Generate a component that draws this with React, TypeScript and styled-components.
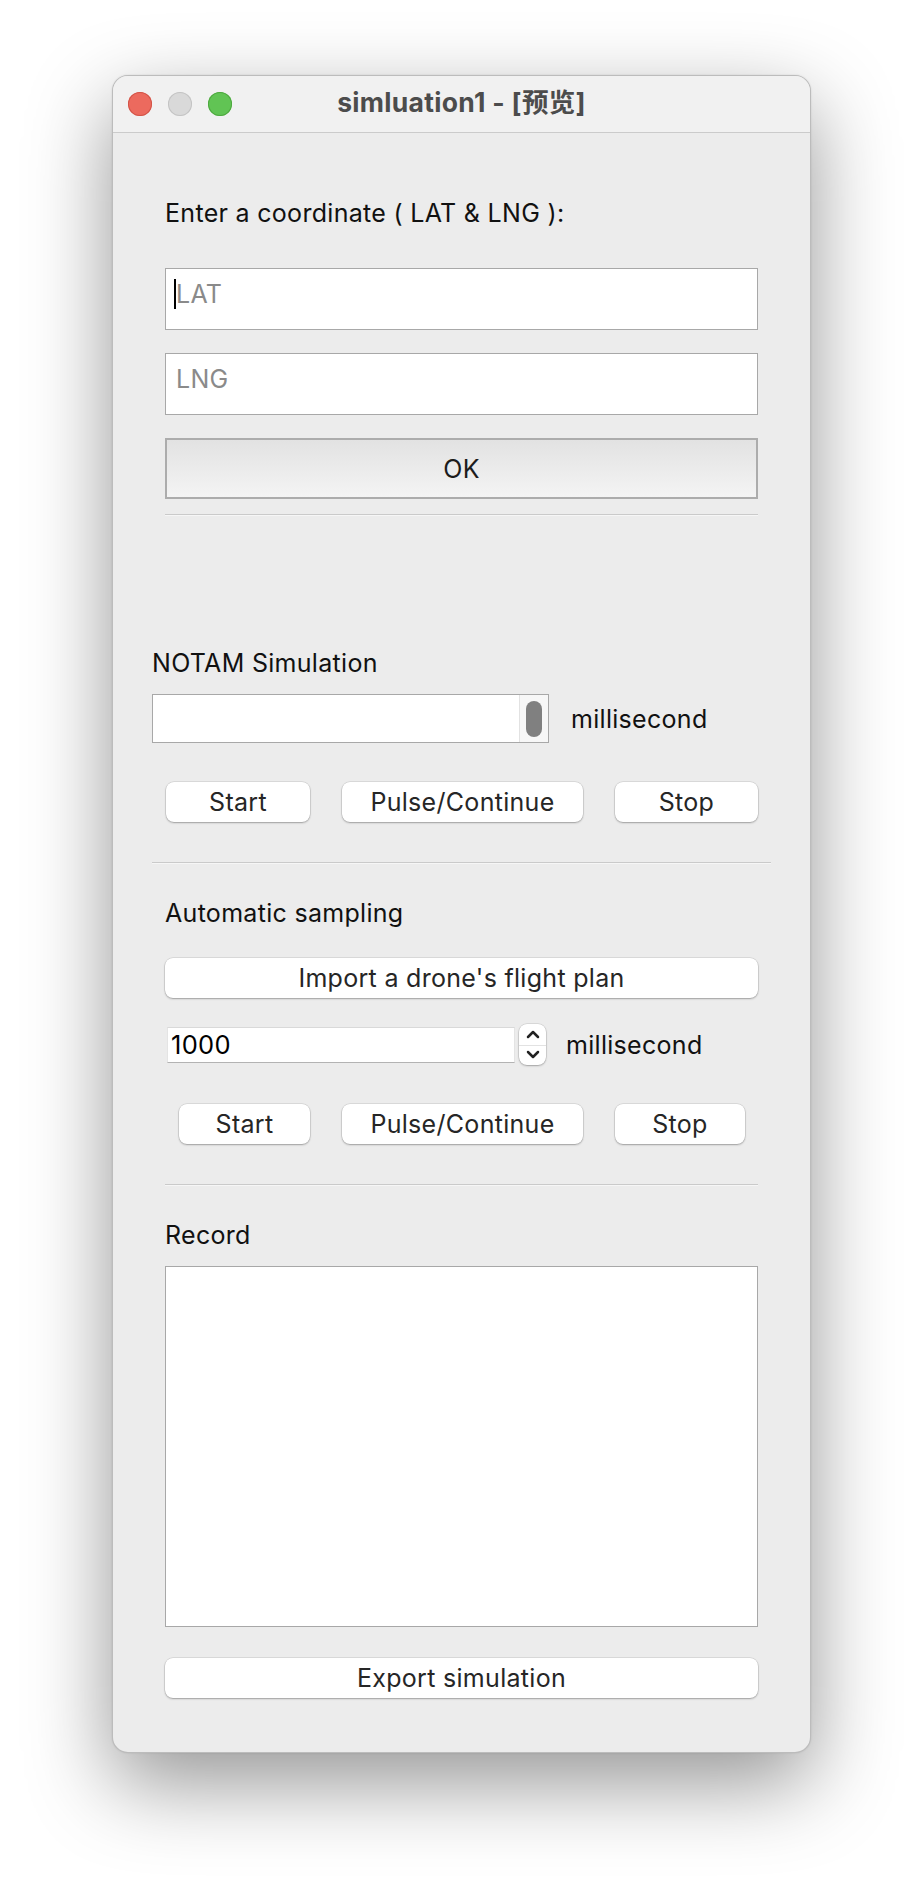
import React from "react";
import styled, { createGlobalStyle } from "styled-components";

const GlobalStyle = createGlobalStyle`
  html, body {
    margin: 0;
    padding: 0;
    background: #ffffff;
  }
  body {
    font-family: Inter, "Noto Sans", "Noto Sans CJK SC", sans-serif;
    letter-spacing: 0.3px;
    -webkit-font-smoothing: antialiased;
  }
  * { box-sizing: border-box; }
`;

const Stage = styled.div`
  width: 922px;
  height: 1900px;
  padding: 75px 0 0 112px;
  overflow: hidden;
`;

const Window = styled.div`
  width: 699px;
  height: 1678px;
  background: #ececec;
  border: 1px solid rgba(0, 0, 0, 0.2);
  border-radius: 16px;
  box-shadow: 0 30px 84px rgba(0, 0, 0, 0.42), 0 0 2px rgba(0, 0, 0, 0.12);
  overflow: hidden;
  display: flex;
  flex-direction: column;
`;

const TitleBar = styled.div`
  height: 57px;
  flex: none;
  background: #f1f1f1;
  border-bottom: 1px solid #cbcbcb;
  display: grid;
  grid-template-columns: 1fr auto 1fr;
  align-items: center;
  padding: 0 15px;
`;

const Lights = styled.div`
  display: flex;
  gap: 16px;
`;

const Light = styled.span<{ $fill: string; $edge: string }>`
  width: 24px;
  height: 24px;
  border-radius: 50%;
  background: ${(p) => p.$fill};
  box-shadow: inset 0 0 0 1px ${(p) => p.$edge};
`;

const Title = styled.div`
  font-family: Inter, "Noto Sans CJK SC", sans-serif;
  font-weight: 700;
  font-size: 26.5px;
  letter-spacing: 0.3px;
  line-height: 32px;
  padding-bottom: 4px;
  color: #4c4c4c;
  white-space: nowrap;
`;

const Content = styled.div`
  flex: 1;
  display: flex;
  flex-direction: column;
`;

const Section = styled.div<{ $inset: number }>`
  display: flex;
  flex-direction: column;
  padding: 0 ${(p) => p.$inset}px;
`;

const Label = styled.div<{ $top: number }>`
  margin-top: ${(p) => p.$top}px;
  font-size: 25px;
  line-height: 30px;
  height: 30px;
  color: #111;
  white-space: nowrap;
`;

const TextField = styled.div<{ $top: number }>`
  margin-top: ${(p) => p.$top}px;
  height: 62px;
  background: #fff;
  border: 1px solid #a8a8a8;
  display: flex;
  align-items: flex-start;
  padding: 10px 0 0 10px;
  font-size: 25px;
  line-height: 30px;
`;

const Caret = styled.span`
  width: 2px;
  height: 30px;
  background: #000;
  margin-left: -2px;
  flex: none;
`;

const Placeholder = styled.span`
  color: #8a8a8a;
`;

const OkButton = styled.button<{ $top: number }>`
  margin-top: ${(p) => p.$top}px;
  height: 61px;
  width: 100%;
  border: 2px solid #acacac;
  background: linear-gradient(#e2e2e2, #f4f4f4);
  font-family: inherit;
  letter-spacing: inherit;
  font-size: 25px;
  color: #1c1c1c;
  padding: 0;
`;

const Divider = styled.hr<{ $top: number }>`
  margin: ${(p) => p.$top}px 0 0 0;
  height: 2px;
  border: none;
  border-top: 1px solid #cacaca;
  border-bottom: 1px solid #f6f6f6;
  flex: none;
`;

const FieldRow = styled.div<{ $top: number }>`
  margin-top: ${(p) => p.$top}px;
  display: flex;
  align-items: center;
`;

const SliderField = styled.div`
  width: 397px;
  height: 49px;
  background: #fff;
  border: 1px solid #a8a8a8;
  display: flex;
  justify-content: flex-end;
`;

const SliderTrack = styled.div`
  width: 29px;
  height: 100%;
  background: #f7f7f7;
  border-left: 1px solid #e2e2e2;
  display: flex;
  align-items: center;
  justify-content: center;
`;

const SliderThumb = styled.div`
  width: 16px;
  height: 36px;
  border-radius: 8px;
  background: #808080;
`;

const Unit = styled.span<{ $gap: number }>`
  margin-left: ${(p) => p.$gap}px;
  font-size: 25px;
  color: #111;
`;

const ButtonRow = styled.div<{ $top: number; $left: number; $right: number }>`
  margin-top: ${(p) => p.$top}px;
  padding: 0 ${(p) => p.$right}px 0 ${(p) => p.$left}px;
  display: flex;
  justify-content: space-between;
`;

const PushButton = styled.button<{ $width?: number; $top?: number }>`
  margin-top: ${(p) => p.$top ?? 0}px;
  width: ${(p) => (p.$width ? `${p.$width}px` : "100%")};
  height: 40px;
  border: none;
  border-radius: 8px;
  background: #fff;
  box-shadow: 0 0 0 0.5px rgba(0, 0, 0, 0.14), 0 1px 2px rgba(0, 0, 0, 0.28);
  font-family: inherit;
  letter-spacing: inherit;
  font-size: 25px;
  color: #262626;
  padding: 0;
  white-space: nowrap;
`;

const SpinInput = styled.div`
  margin-left: 2px;
  width: 348px;
  height: 36px;
  background: #fff;
  border-top: 1px solid #d9d9d9;
  border-left: 1px solid #e4e4e4;
  border-right: 1px solid #e4e4e4;
  border-bottom: 1px solid #b3b3b3;
  padding-left: 3px;
  display: flex;
  align-items: center;
  font-size: 25.5px;
  color: #000;
`;

const Spinner = styled.div`
  margin-left: 4px;
  width: 27px;
  height: 41px;
  border-radius: 8px;
  background: #fff;
  box-shadow: 0 0 0 0.5px rgba(0, 0, 0, 0.15), 0 1px 2px rgba(0, 0, 0, 0.25);
  display: grid;
  grid-template-rows: 1fr 1fr;
  overflow: hidden;
`;

const SpinHalf = styled.div<{ $sep?: boolean }>`
  display: flex;
  align-items: center;
  justify-content: center;
  border-top: ${(p) => (p.$sep ? "1px solid #e2e2e2" : "none")};
`;

const RecordBox = styled.div<{ $top: number }>`
  margin-top: ${(p) => p.$top}px;
  height: 361px;
  background: #fff;
  border: 1px solid #a8a8a8;
`;

const Chevron = ({ up }: { up?: boolean }) => (
  <svg width="14" height="10" viewBox="0 0 14 10">
    <polyline
      points={up ? "2,8 7,3 12,8" : "2,2 7,7 12,2"}
      fill="none"
      stroke="#222"
      strokeWidth="2.5"
      strokeLinecap="round"
      strokeLinejoin="round"
    />
  </svg>
);

export default function App() {
  return (
    <>
      <GlobalStyle />
      <Stage>
        <Window>
          <TitleBar>
            <Lights>
              <Light $fill="#ec6a5e" $edge="#d25448" />
              <Light $fill="#d9d9d9" $edge="#c4c4c4" />
              <Light $fill="#61c454" $edge="#4ea83f" />
            </Lights>
            <Title>simluation1 - [预览]</Title>
            <span />
          </TitleBar>
          <Content>
            <Section $inset={52}>
              <Label $top={65}>Enter a coordinate ( LAT &amp; LNG ):</Label>
              <TextField $top={40}>
                <Caret />
                <Placeholder>LAT</Placeholder>
              </TextField>
              <TextField $top={23}>
                <Placeholder>LNG</Placeholder>
              </TextField>
              <OkButton $top={23}>OK</OkButton>
              <Divider $top={15} />
            </Section>

            <Section $inset={39}>
              <Label $top={132}>NOTAM Simulation</Label>
              <FieldRow $top={16}>
                <SliderField>
                  <SliderTrack>
                    <SliderThumb />
                  </SliderTrack>
                </SliderField>
                <Unit $gap={22}>millisecond</Unit>
              </FieldRow>
              <ButtonRow $top={39} $left={14} $right={13}>
                <PushButton $width={144}>Start</PushButton>
                <PushButton $width={241}>Pulse/Continue</PushButton>
                <PushButton $width={143}>Stop</PushButton>
              </ButtonRow>
              <Divider $top={40} />
            </Section>

            <Section $inset={52}>
              <Label $top={34}>Automatic sampling</Label>
              <PushButton $top={30}>Import a drone's flight plan</PushButton>
              <FieldRow $top={26}>
                <SpinInput>1000</SpinInput>
                <Spinner>
                  <SpinHalf>
                    <Chevron up />
                  </SpinHalf>
                  <SpinHalf $sep>
                    <Chevron />
                  </SpinHalf>
                </Spinner>
                <Unit $gap={20}>millisecond</Unit>
              </FieldRow>
              <ButtonRow $top={39} $left={14} $right={13}>
                <PushButton $width={131}>Start</PushButton>
                <PushButton $width={241}>Pulse/Continue</PushButton>
                <PushButton $width={130}>Stop</PushButton>
              </ButtonRow>
              <Divider $top={40} />
            </Section>

            <Section $inset={52}>
              <Label $top={34}>Record</Label>
              <RecordBox $top={16} />
              <PushButton $top={31}>Export simulation</PushButton>
            </Section>
          </Content>
        </Window>
      </Stage>
    </>
  );
}
